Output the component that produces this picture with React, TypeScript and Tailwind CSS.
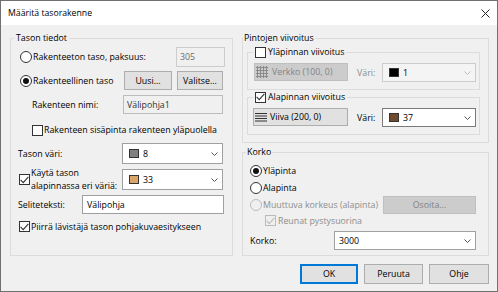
import React from "react";

const btn = "flex items-center justify-center bg-[#e1e1e1] border border-[#adadad]";
const dis = "text-[#8d8d8d]";

function Check({ on = false, off = false }: { on?: boolean; off?: boolean }) {
  return (
    <span
      className={
        "w-[11px] h-[11px] shrink-0 border flex items-center justify-center " +
        (off ? "border-[#bcbcbc] bg-[#f0f0f0]" : "border-[#333333] bg-white")
      }
    >
      {on && (
        <svg width="9" height="8" viewBox="0 0 9 8">
          <polyline points="0.6,3.8 3.2,6.6 8.4,0.8" fill="none" stroke={off ? "#bcbcbc" : "#333333"} strokeWidth="1.1" />
        </svg>
      )}
    </span>
  );
}

function Radio({ on = false, off = false }: { on?: boolean; off?: boolean }) {
  return (
    <span
      className={
        "w-[12px] h-[12px] shrink-0 rounded-full border flex items-center justify-center " +
        (off ? "border-[#bcbcbc] bg-[#f0f0f0]" : "border-[#333333] bg-white")
      }
    >
      {on && <span className="w-[6px] h-[6px] rounded-full bg-[#111111]" />}
    </span>
  );
}

function Chevron({ light = false }: { light?: boolean }) {
  return (
    <svg className="ml-auto shrink-0" width="7" height="4" viewBox="0 0 7 4">
      <polyline points="0.5,0.5 3.5,3.5 6.5,0.5" fill="none" stroke={light ? "#bdbdbd" : "#555555"} strokeWidth="1" />
    </svg>
  );
}

function ColorCombo({ color, value, w, off = false }: { color: string; value: string; w: string; off?: boolean }) {
  return (
    <div
      className={
        "flex items-center h-full pl-[6px] pr-[4px] border " +
        w +
        (off ? " bg-[#f4f4f4] border-[#cccccc]" : " bg-white border-[#a0a0a0]")
      }
    >
      <span className="w-[10px] h-[9px] border border-[#333333] shrink-0" style={{ backgroundColor: color }} />
      <span className="ml-[4px]">{value}</span>
      <Chevron light={off} />
    </div>
  );
}

function GridIcon() {
  return (
    <svg width="12" height="12" viewBox="0 0 12 12" className="shrink-0">
      <path
        d="M1.5 0V12M4.5 0V12M7.5 0V12M10.5 0V12M0 1.5H12M0 4.5H12M0 7.5H12M0 10.5H12"
        stroke="#8a8a8a"
        strokeWidth="1"
      />
    </svg>
  );
}

function LinesIcon() {
  return (
    <svg width="12" height="9" viewBox="0 0 12 9" className="shrink-0">
      <path d="M0 0.5H12M0 3H12M0 5.5H12M0 8H12" stroke="#333333" strokeWidth="1" />
    </svg>
  );
}

export default function App() {
  return (
    <div className="w-[498px] h-[292px] border border-[#707070] bg-[#f0f0f0] flex flex-col text-[8.8px] leading-[12px] text-black font-['Open_Sans',sans-serif]">
      {/* title bar */}
      <div className="h-[24px] shrink-0 bg-white flex items-center pl-[7px] pr-[7px]">
        <span className="text-[8.7px]">Määritä tasorakenne</span>
        <svg className="ml-auto" width="9" height="9" viewBox="0 0 9 9">
          <path d="M0.5 0.5L8.5 8.5M8.5 0.5L0.5 8.5" stroke="#222222" strokeWidth="1" />
        </svg>
      </div>

      <div className="flex-1 flex flex-col pl-[9px] pr-[8px] pt-[7px]">
        <div className="flex gap-[9px]">
          {/* Tason tiedot */}
          <fieldset className="w-[223px] h-[224px] border border-[#dcdcdc]">
            <legend className="ml-[3px] px-[2px] leading-[12px]">Tason tiedot</legend>
            <div className="flex flex-col">
              <div className="flex items-center h-[20px] mt-[3px] pl-[9px]">
                <Radio />
                <span className="ml-[1px]">Rakenteeton taso, paksuus:</span>
                <div className="ml-auto mr-[7px] w-[49px] h-full border border-[#cccccc] bg-[#f0f0f0] pl-[3px] flex items-center text-[#6d6d6d]">
                  305
                </div>
              </div>
              <div className="flex items-center h-[19px] mt-[4px] pl-[9px]">
                <Radio on />
                <span className="ml-[1px]">Rakenteellinen taso</span>
                <div className={btn + " ml-auto w-[48px] h-full"}>Uusi...</div>
                <div className={btn + " ml-[5px] mr-[9px] w-[46px] h-full"}>Valitse...</div>
              </div>
              <div className="flex items-center h-[19px] mt-[5px] pl-[21px]">
                <span>Rakenteen nimi:</span>
                <div className="ml-auto mr-[9px] w-[100px] h-full border border-[#bcbcbc] bg-[#f0f0f0] pl-[3px] flex items-center text-[#333333]">
                  Välipohja1
                </div>
              </div>
              <div className="flex items-center h-[12px] mt-[10px] pl-[21px]">
                <Check />
                <span className="ml-[1px]">Rakenteen sisäpinta rakenteen yläpuolella</span>
              </div>
              <div className="flex items-center h-[21px] mt-[7px] pl-[7px]">
                <span>Tason väri:</span>
                <div className="ml-auto mr-[9px] h-full">
                  <ColorCombo color="#808080" value="8" w="w-[101px]" />
                </div>
              </div>
              <div className="flex items-center h-[21px] mt-[5px] pl-[8px]">
                <Check on />
                <span className="ml-[1px] leading-[13px]">
                  Käytä tason
                  <br />
                  alapinnassa eri väriä:
                </span>
                <div className="ml-auto mr-[9px] h-full">
                  <ColorCombo color="#dba468" value="33" w="w-[101px]" />
                </div>
              </div>
              <div className="flex items-center h-[19px] mt-[5px] pl-[7px]">
                <span>Seliteteksti:</span>
                <div className="ml-auto mr-[8px] w-[142px] h-full border border-[#a0a0a0] bg-white pl-[4px] flex items-center">
                  Välipohja
                </div>
              </div>
              <div className="flex items-center h-[11px] mt-[7px] pl-[8px]">
                <Check on />
                <span className="ml-[1px]">Piirrä lävistäjä tason pohjakuvaesitykseen</span>
              </div>
            </div>
          </fieldset>

          <div className="flex-1 flex flex-col">
            {/* Pintojen viivoitus */}
            <fieldset className="h-[111px] border border-[#dcdcdc]">
              <legend className="px-[1px] leading-[12px]">Pintojen viivoitus</legend>
              <fieldset className="mt-[2px] ml-[4px] mr-[8px] h-[44px] border border-[#dcdcdc]">
                <legend className="ml-[5px] pl-[2px] pr-[2px] leading-[12px]">
                  <span className="flex items-center gap-[2px]">
                    <Check />
                    Yläpinnan viivoitus
                  </span>
                </legend>
                <div className="flex items-start mt-[5px] pl-[6px]">
                  <div className="w-[94px] h-[18px] bg-[#cccccc] border border-[#bfbfbf] flex items-center pl-[1px] text-[#838383]">
                    <GridIcon />
                    <span className="ml-[4px]">Verkko (100, 0)</span>
                  </div>
                  <span className={dis + " ml-[9px] w-[25px] h-[19px] flex items-center"}>Väri:</span>
                  <div className="h-[19px]">
                    <ColorCombo color="#000000" value="1" w="w-[94px]" off />
                  </div>
                </div>
              </fieldset>
              <fieldset className="mt-[1px] ml-[4px] mr-[8px] h-[44px] border border-[#dcdcdc]">
                <legend className="ml-[5px] pl-[2px] pr-[2px] leading-[12px]">
                  <span className="flex items-center gap-[2px]">
                    <Check on />
                    Alapinnan viivoitus
                  </span>
                </legend>
                <div className="flex items-start mt-[5px] pl-[5px]">
                  <div className={"w-[95px] h-[18px] bg-[#e1e1e1] border border-[#adadad] flex items-center pl-[1px]"}>
                    <LinesIcon />
                    <span className="ml-[3px]">Viiva (200, 0)</span>
                  </div>
                  <span className="ml-[9px] w-[25px] h-[19px] flex items-center">Väri:</span>
                  <div className="h-[19px]">
                    <ColorCombo color="#6e4c2d" value="37" w="w-[94px] !border-[#7a7a7a]" />
                  </div>
                </div>
              </fieldset>
            </fieldset>

            {/* Korko */}
            <fieldset className="mt-[3px] h-[110px] border border-[#dcdcdc]">
              <legend className="ml-[3px] px-[1px] leading-[12px]">Korko</legend>
              <div className="flex flex-col">
                <div className="flex items-center h-[12px] mt-[7px] pl-[7px]">
                  <Radio on />
                  <span className="ml-[1px]">Yläpinta</span>
                </div>
                <div className="flex items-center h-[12px] mt-[5px] pl-[7px]">
                  <Radio />
                  <span className="ml-[1px]">Alapinta</span>
                </div>
                <div className="flex items-center h-[18px] mt-[2px] pl-[7px]">
                  <Radio off />
                  <span className={dis + " ml-[1px]"}>Muuttuva korkeus (alapinta)</span>
                  <div className="ml-auto mr-[12px] w-[93px] h-full bg-[#cccccc] border border-[#bfbfbf] flex items-center justify-center text-[#838383]">
                    Osoita...
                  </div>
                </div>
                <div className="flex items-center h-[11px] mt-[1px] pl-[22px]">
                  <Check on off />
                  <span className={dis + " ml-[2px]"}>Reunat pystysuorina</span>
                </div>
                <div className="flex items-center h-[19px] mt-[5px] pl-[7px]">
                  <span>Korko:</span>
                  <div className="ml-auto mr-[12px] w-[142px] h-full border border-[#a0a0a0] bg-white pl-[4px] pr-[4px] flex items-center">
                    <span>3000</span>
                    <Chevron />
                  </div>
                </div>
              </div>
            </fieldset>
          </div>
        </div>

        {/* dialog buttons */}
        <div className="flex justify-end gap-[6px] mt-[8px]">
          <div className="w-[58px] h-[20px] flex items-center justify-center bg-[#e1e1e1] border border-[#0078d7] shadow-[inset_0_0_0_1px_#0078d7]">OK</div>
          <div className={btn + " w-[59px] h-[20px]"}>Peruuta</div>
          <div className={btn + " w-[60px] h-[20px]"}>Ohje</div>
        </div>
      </div>
    </div>
  );
}
